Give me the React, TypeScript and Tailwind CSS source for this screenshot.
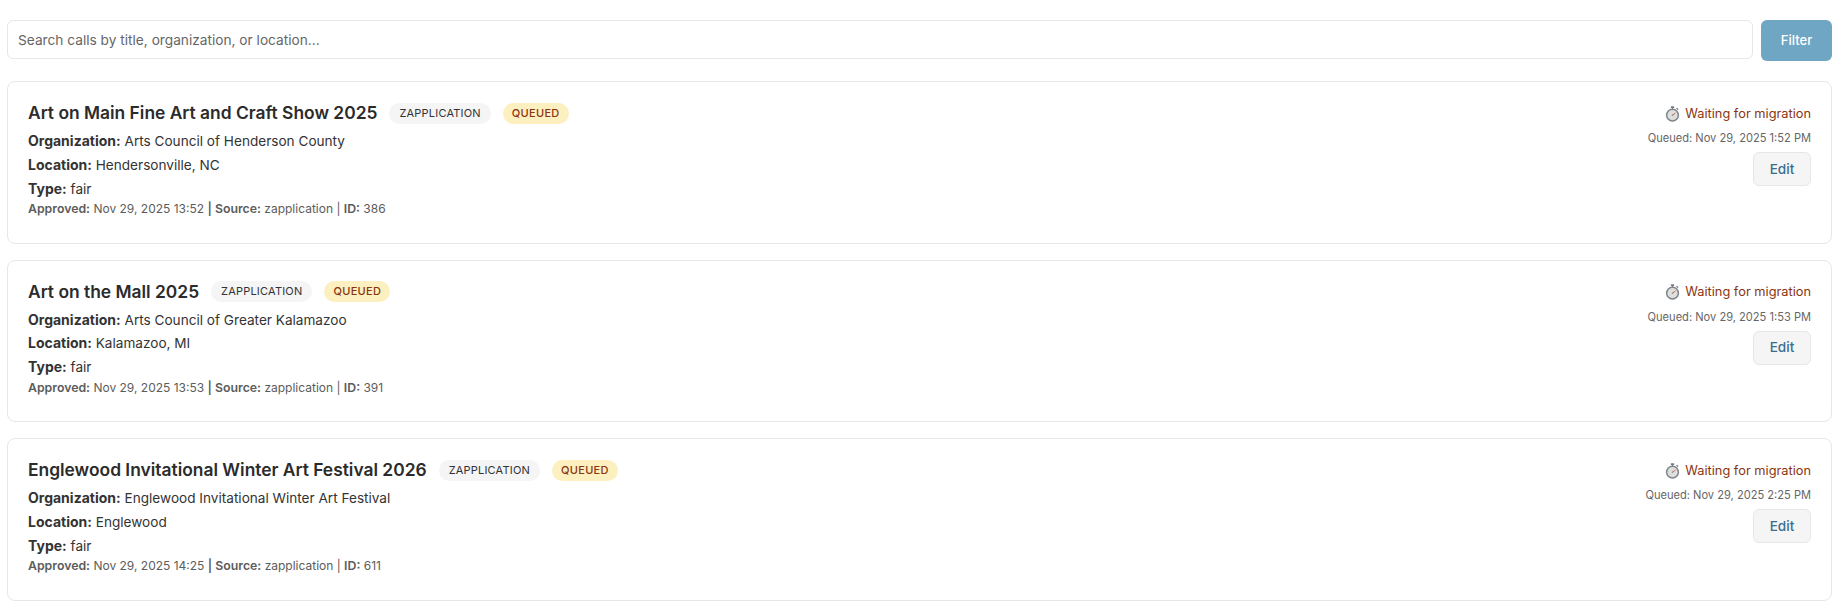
const calls = [
  { title: 'Art on Main Fine Art and Craft Show 2025', org: 'Arts Council of Henderson County', location: 'Hendersonville, NC', approved: 'Nov 29, 2025 13:52', id: 386, queued: 'Nov 29, 2025 1:52 PM' },
  { title: 'Art on the Mall 2025', org: 'Arts Council of Greater Kalamazoo', location: 'Kalamazoo, MI', approved: 'Nov 29, 2025 13:53', id: 391, queued: 'Nov 29, 2025 1:53 PM' },
  { title: 'Englewood Invitational Winter Art Festival 2026', org: 'Englewood Invitational Winter Art Festival', location: 'Englewood', approved: 'Nov 29, 2025 14:25', id: 611, queued: 'Nov 29, 2025 2:25 PM' },
];

function Stopwatch() {
  return (
    <svg width="15" height="16" viewBox="0 0 15 16" className="shrink-0">
      <rect x="5.8" y="0.2" width="3.4" height="1.8" rx="0.6" fill="#777b82" />
      <rect x="6.9" y="1.6" width="1.2" height="2" fill="#777b82" />
      <rect x="11.2" y="2.2" width="2.2" height="1.4" rx="0.5" fill="#777b82" transform="rotate(40 12.3 2.9)" />
      <circle cx="7.5" cy="9.2" r="6.6" fill="#7f848b" />
      <circle cx="7.5" cy="9.2" r="5.1" fill="#dededc" />
      <path d="M7.5 9.2 L10.2 7.2" stroke="#d9583f" strokeWidth="0.9" strokeLinecap="round" />
      <circle cx="7.5" cy="9.2" r="0.8" fill="#8b8f95" />
    </svg>
  );
}

function Card({ call }: { call: (typeof calls)[number] }) {
  return (
    <div className="flex justify-between rounded-lg border border-[#e5e7eb] bg-white px-[20px] pt-[19px] h-[162.5px]">
      <div>
        <div className="flex items-center h-[24px]">
          <h3 className="text-[17.4px] leading-[24px] font-semibold text-[#2b2b2b]">{call.title}</h3>
          <span className="ml-[12px] flex items-center h-[21px] px-[10px] rounded-full bg-[#f5f5f6] text-[11px] font-normal text-[#333333] tracking-[0.2px]">ZAPPLICATION</span>
          <span className="ml-[12px] flex items-center h-[21px] px-[9px] rounded-full bg-[#fdf0c0] text-[11px] font-medium text-[#8a3510] tracking-[0.3px]">QUEUED</span>
        </div>
        <div className="mt-[5px] text-[13.6px] leading-[23.8px] text-[#333333]">
          <p><strong className="text-[14px] leading-none font-bold">Organization:</strong> {call.org}</p>
          <p><strong className="text-[14px] leading-none font-bold">Location:</strong> {call.location}</p>
          <p><strong className="text-[14px] leading-none font-bold">Type:</strong> fair</p>
        </div>
        <p className="text-[12px] leading-[16px] text-[#5c5c5c]">
          <strong className="text-[12.3px] leading-none font-semibold">Approved:</strong> {call.approved} <strong className="text-[12.3px] leading-none font-semibold">| Source:</strong> zapplication | <strong className="text-[12.3px] leading-none font-semibold">ID:</strong> {call.id}
        </p>
      </div>
      <div className="flex flex-col items-end">
        <div className="flex items-center gap-[5px] h-[25px] text-[12.8px] text-[#8a3510]">
          <Stopwatch />
          <span>Waiting for migration</span>
        </div>
        <p className="mt-[3px] text-[11.1px] leading-[18px] text-[#666666]">Queued: {call.queued}</p>
        <button className="mt-[5px] h-[34px] w-[58px] rounded-md border border-[#e5e7eb] bg-[#f5f5f6] text-[13.6px] font-medium text-[#3a6d8c]">Edit</button>
      </div>
    </div>
  );
}

export default function App() {
  return (
    <div className="h-[612px] bg-white pl-[7px] pr-[13px] pt-[20px] font-['Inter',sans-serif]">
      <div className="flex gap-[8px] items-start">
        <input
          placeholder="Search calls by title, organization, or location..."
          className="flex-1 h-[39px] rounded-md border border-[#e5e7eb] px-[10px] text-[13.7px] placeholder:text-[#666666] outline-none"
        />
        <button className="h-[41px] w-[71px] rounded-md bg-[#6fa6c3] text-[13px] font-medium text-white">Filter</button>
      </div>
      <div className="mt-[20px] flex flex-col gap-[16px]">
        {calls.map(call => (
          <Card key={call.id} call={call} />
        ))}
      </div>
    </div>
  );
}
